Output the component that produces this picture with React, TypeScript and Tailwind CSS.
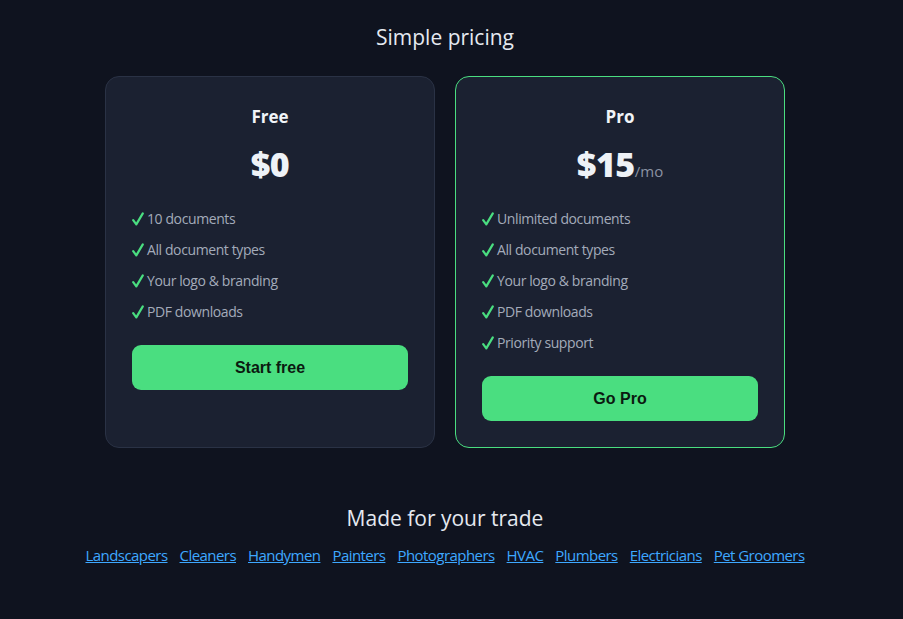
const plans = [
  {
    name: "Free",
    price: "$0",
    suffix: "",
    features: ["10 documents", "All document types", "Your logo & branding", "PDF downloads"],
    cta: "Start free",
    featured: false,
  },
  {
    name: "Pro",
    price: "$15",
    suffix: "/mo",
    features: [
      "Unlimited documents",
      "All document types",
      "Your logo & branding",
      "PDF downloads",
      "Priority support",
    ],
    cta: "Go Pro",
    featured: true,
  },
];

const trades = [
  "Landscapers",
  "Cleaners",
  "Handymen",
  "Painters",
  "Photographers",
  "HVAC",
  "Plumbers",
  "Electricians",
  "Pet Groomers",
];

function Check() {
  return (
    <svg width="12" height="14" viewBox="0 0 12 14" className="mr-[3px] shrink-0" fill="none">
      <path
        d="M1.2 8.2 L4.3 12.4 L10.8 1.4"
        stroke="#4ade80"
        strokeWidth="2.2"
        strokeLinecap="round"
        strokeLinejoin="round"
      />
    </svg>
  );
}

export default function App() {
  return (
    <div
      className="min-h-[619px] bg-[#0f131f] text-[#e5e9f0]"
      style={{ fontFamily: '"Open Sans", "Noto Sans", sans-serif' }}
    >
      <main className="w-[890px] pt-[22px] pb-10">
        <section>
          <h2 className="text-center text-[21px] leading-[30px]">Simple pricing</h2>
          <div className="mt-6 grid grid-cols-[330px_330px] justify-center gap-[20px]">
            {plans.map((plan) => (
              <div
                key={plan.name}
                className={`flex flex-col rounded-[14px] border bg-[#1b2131] px-[26px] pt-[26px] pb-[26px] ${
                  plan.featured ? "border-[#4ade80]" : "border-[#2a3245]"
                }`}
              >
                <h3 className="text-center text-[17px] font-bold leading-7 text-[#f1f4f8]">{plan.name}</h3>
                <div className="mt-[13px] flex h-10 items-baseline justify-center leading-10">
                  <span className="text-[34px] font-extrabold tracking-[-0.5px] text-[#eef2f7]">{plan.price}</span>
                  {plan.suffix && <span className="text-[15px] leading-none text-[#8b93a3]">{plan.suffix}</span>}
                </div>
                <ul className="mt-[24px] flex flex-col gap-[10px] text-[14px] leading-[21px] tracking-[-0.4px] text-[#a3abba]">
                  {plan.features.map((f) => (
                    <li key={f} className="flex h-[21px] items-center">
                      <Check />
                      {f}
                    </li>
                  ))}
                </ul>
                <button
                  className="mt-[23px] h-[45px] w-full rounded-[9px] bg-[#4ade80] text-[16px] font-bold text-[#0b1a10]"
                  style={{ fontFamily: '"Liberation Sans", Arial, sans-serif' }}
                >
                  {plan.cta}
                </button>
              </div>
            ))}
          </div>
        </section>

        <section className="mt-[55px] text-center">
          <h2 className="text-[21px] leading-[30px]">Made for your trade</h2>
          <div className="mt-[11px] flex justify-center gap-x-[12px] text-[15px] leading-[22px] tracking-[-0.55px]">
            {trades.map((t) => (
              <a key={t} href="#" className="text-[#3ea8ff] underline">
                {t}
              </a>
            ))}
          </div>
        </section>
      </main>
    </div>
  );
}
